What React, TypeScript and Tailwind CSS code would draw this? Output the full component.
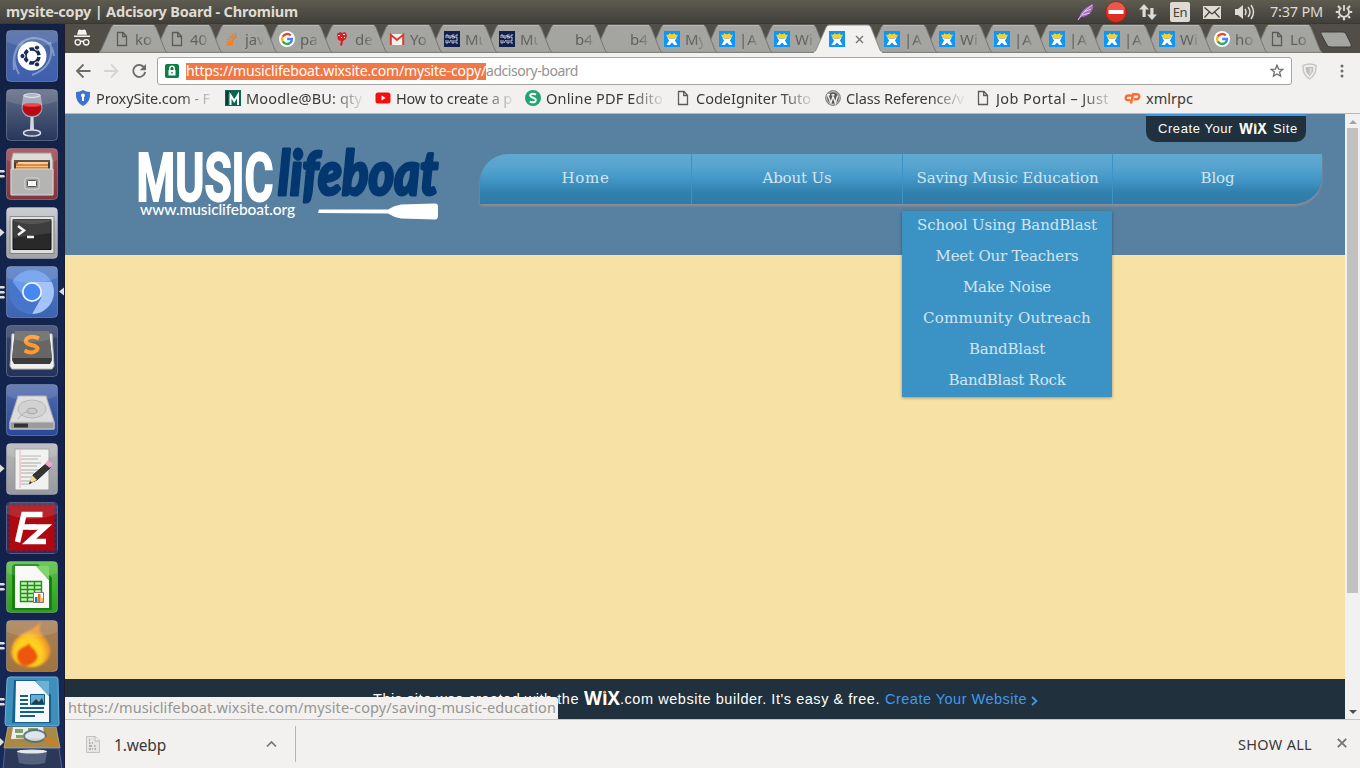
import { useLayoutEffect, useRef, type ReactNode } from "react";

const UI = "font-['Noto_Sans','Open_Sans',sans-serif]";

/* Text run that is tracked to fill a known width. */
function Fit({ w, className = "", children }: { w: number; className?: string; children: string }) {
  const ref = useRef<HTMLSpanElement>(null);
  useLayoutEffect(() => {
    const el = ref.current;
    if (!el) return;
    el.style.letterSpacing = "0px";
    const natural = el.getBoundingClientRect().width;
    el.style.letterSpacing = `${(w - natural) / children.length}px`;
  }, [w, children]);
  return (
    <span ref={ref} className={`inline-block shrink-0 whitespace-pre ${className}`}>
      {children}
    </span>
  );
}

const DocIcon = () => (
  <svg width="16" height="16" viewBox="0 0 16 16" fill="none" stroke="#5c5b59" strokeWidth="1.3">
    <path d="M3.5 1.5h5.5l3.5 3.7v9.3h-9zM8.7 1.5v4h3.8" />
  </svg>
);
const GoogleIcon = () => (
  <svg width="16" height="16" viewBox="0 0 16 16">
    <circle cx="8" cy="8" r="8" fill="#fff" />
    <g fill="none" strokeWidth="2.3">
      <path d="M11.7 4.5A5 5 0 0 0 3.7 5.6" stroke="#ea4335" />
      <path d="M3.7 5.5a5 5 0 0 0 0 5" stroke="#fbbc05" />
      <path d="M3.7 10.4a5 5 0 0 0 7.7 1.3" stroke="#34a853" />
      <path d="M11.3 11.8A5 5 0 0 0 13 8H8.2" stroke="#4285f4" />
    </g>
  </svg>
);
const StackIcon = () => (
  <svg width="16" height="16" viewBox="0 0 16 16" fill="none" strokeWidth="1.3">
    <path d="M2.500 13.500h6.500M2.700 11l6.300.9M3.500 8.200l5.800 2M5.500 5.300l4.800 3.500M8 3l3 4.800M11.200 1.500l.8 5.500" stroke="#ef7d22" />
  </svg>
);
const RedIcon = () => (
  <svg width="16" height="16" viewBox="0 0 16 16">
    <path d="M3 3l3-2 2 1 3-1 2 3-1 4-3 2-1 5-2-1 1-4-3-1z" fill="#d31f26" />
    <path d="M4 4h2v1H4zM9 3h2v1H9zM7 6h1v1H7zM10 6h1v1h-1z" fill="#fff" />
  </svg>
);
const GmailIcon = () => (
  <svg width="16" height="16" viewBox="0 0 16 16">
    <path d="M1 3h14v11H1z" fill="#f4f3f1" />
    <path d="M1.8 14V3.8L8 9l6.2-5.2V14" fill="none" stroke="#d83b30" strokeWidth="2" />
  </svg>
);
const MusicIcon = () => (
  <svg width="16" height="16" viewBox="0 0 16 16">
    <path d="M0 0h16v16H0z" fill="#12204d" />
    <path d="M2 7V4h2v3M5 4v3h2V4M10.500 4H8v1.500h2.500V7H8M14 4h-2v3h2M2 9v3h2V9M5 12l2-3M8 9v3h2V9M14 9h-2v3h2" fill="none" stroke="#c2c8d8" strokeWidth="1" />
  </svg>
);
const WixIcon = () => (
  <svg width="16" height="16" viewBox="0 0 16 16">
    <path d="M0 0h16v16H0z" fill="#0b96f8" />
    <path d="M3.200 6.500q4.800 2.500 9.600 0L10.900 9.500 13.500 14H10.300L8 11.500 5.700 14H2.500l2.600-4.500z" fill="#fff" />
    <path d="M2 3.500l2 .5L5.500 2.300 8 3.600l2.500-1.300L12 4l2-.5-1.300 3Q8 8.800 3.300 6.500z" fill="#fcd023" />
  </svg>
);

type Tab = { icon?: () => ReactNode; text: string; active?: boolean };
const tabs: Tab[] = [
  { icon: DocIcon, text: "ko" },
  { icon: DocIcon, text: "40" },
  { icon: StackIcon, text: "jav" },
  { icon: GoogleIcon, text: "pa" },
  { icon: RedIcon, text: "de" },
  { icon: GmailIcon, text: "Yo" },
  { icon: MusicIcon, text: "Mu" },
  { icon: MusicIcon, text: "Mu" },
  { text: "b4" },
  { text: "b4" },
  { icon: WixIcon, text: "My" },
  { icon: WixIcon, text: "| A" },
  { icon: WixIcon, text: "Wi" },
  { icon: WixIcon, text: "", active: true },
  { icon: WixIcon, text: "| A" },
  { icon: WixIcon, text: "Wi" },
  { icon: WixIcon, text: "| A" },
  { icon: WixIcon, text: "| A" },
  { icon: WixIcon, text: "| A" },
  { icon: WixIcon, text: "Wi" },
  { icon: GoogleIcon, text: "ho" },
  { icon: DocIcon, text: "Lo" },
];

function TabStrip() {
  return (
    <div className="flex h-[29px] bg-[#504e46]">
      <div className="flex w-[34px] shrink-0 justify-center pt-[5px]">
        <svg width="18" height="18" viewBox="0 0 18 18" fill="#f4f3f0">
          <path d="M5.2 1.4l.9-.9 2.9.6 2.9-.6.9.9 1.2 4.3H4zM1 6.6h16v1.4H1z" />
          <g fill="none" stroke="#f4f3f0" strokeWidth="1.4">
            <circle cx="4.8" cy="13.3" r="2.7" />
            <circle cx="13.2" cy="13.3" r="2.7" />
            <path d="M7.5 12.6q1.5-.8 3 0" />
          </g>
        </svg>
      </div>
      {tabs.map((t, i) => {
        const Icon = t.icon;
        return (
          <div key={i} className="relative h-[29px] w-[55px] shrink-0" style={{ zIndex: t.active ? 40 : 30 - i }}>
            <svg className="absolute left-0 top-0" width="70" height="29" viewBox="0 0 70 29">
              <path
                d="M0 28.500L2 26 12 3.500Q13 1 15 1H54Q56 1 57 3.500L66 26 68 28.500V29H0Z"
                fill={t.active ? "#f2f1f0" : "#a4a4a1"}
                stroke={t.active ? "#8a8985" : "#72716d"}
                strokeWidth=".9"
              />
              <path d="M0 28.500H68" stroke={t.active ? "#f2f1f0" : "#82817e"} strokeWidth="1.4" />
              {!t.active && <path d="M14 1.500H55" stroke="#b8b8b5" />}
            </svg>
            <div className="relative flex h-full items-center pl-[15px] pt-[1px]">
              <span className="block h-4 w-4">{Icon && <Icon />}</span>
              {t.active ? (
                <svg className="ml-[10px]" width="9" height="9" viewBox="0 0 9 9" stroke="#777673" strokeWidth="1.4">
                  <path d="M1 1l7 7M8 1L1 8" />
                </svg>
              ) : (
                <span
                  className={`block overflow-hidden whitespace-pre text-[15px] leading-5 text-[#62615f] [mask-image:linear-gradient(90deg,#000_55%,rgba(0,0,0,0.25)_100%)] [word-spacing:-4px] ${t.text === "| A" ? "ml-[4px] w-[19px]" : "ml-[5px] w-[18px]"} ${UI}`}
                >
                  {t.text}
                </span>
              )}
            </div>
          </div>
        );
      })}
      <svg className="ml-[10px] mt-[6px] shrink-0" width="38" height="20" viewBox="0 0 38 20">
        <path d="M3 2h21q2 0 3 2l5 10q1 3-1 3H12q-3 0-4-2L2 4q-1-2 1-2z" fill="#a4a4a1" stroke="#3d3c37" />
      </svg>
    </div>
  );
}

function SystemBar() {
  return (
    <div
      className={`flex h-6 shrink-0 items-center bg-[linear-gradient(#5e5b4f,#56544b_25%,#403f3a_95%,#34332e)] pl-1.5 text-[#dfdbd2] ${UI}`}
    >
      <Fit w={292} className="-mt-[2px] text-[14.5px] font-bold leading-6">
        mysite-copy | Adcisory Board - Chromium
      </Fit>
      <div className="ml-auto flex h-6 items-center">
        <svg width="18" height="18" viewBox="0 0 18 18">
          <path d="M1 17L4 10Q8 4 16 1q1 4-2 8-4 5-10 5z" fill="#a56fc6" />
          <path d="M1 17Q6 8 15 2M5 12l8-2M7 9l7-3" stroke="#e3c3ef" fill="none" />
        </svg>
        <svg className="ml-[10px]" width="22" height="22" viewBox="0 0 22 22">
          <circle cx="11" cy="11" r="10.500" fill="#d93126" stroke="#a91d17" />
          <path d="M2 9a9 8 0 0 1 18 0q-9 4-18 0z" fill="#ef756a" opacity=".6" />
          <path d="M3.500 9h15v4h-15z" fill="#fff" />
        </svg>
        <svg className="ml-[12px]" width="18" height="18" viewBox="0 0 18 18" fill="#dfdbd2">
          <path d="M5 1l5 5.500H6.700V14H3.500V6.500H0zM13 17l-5-5.500h3.300V5h3.200v6.500H18z" />
        </svg>
        <div className="ml-[13px] flex h-[20px] w-[20px] items-center justify-center rounded-[2px] bg-[#dfdbd2] text-[13px] leading-5 tracking-[-0.5px] text-[#44423c]">
          En
        </div>
        <svg className="ml-[13px]" width="18" height="13" viewBox="0 0 18 13">
          <path d="M0 0h18v13H0z" fill="#dfdbd2" />
          <path d="M1.500 1.500L9 8l7.500-6.500M1.500 11.500L6.500 6M16.500 11.500L11.500 6" stroke="#45433e" strokeWidth="1.300" fill="none" />
        </svg>
        <svg className="ml-[14px]" width="20" height="16" viewBox="0 0 20 16">
          <path d="M0 5h3l5-4v14l-5-4H0z" fill="#dfdbd2" />
          <path d="M10 5q2 3 0 6M13 3q4 5 0 10M16 1q5 7 0 14" stroke="#dfdbd2" strokeWidth="1.500" fill="none" />
        </svg>
        <Fit w={53} className="-mt-[2px] ml-[15px] text-[14.5px] leading-6">
          7:37 PM
        </Fit>
        <svg className="ml-[12px] mr-[7px]" width="18" height="18" viewBox="0 0 18 18" fill="none" stroke="#dfdbd2">
          <path d="M6.200 4.800a5 5 0 1 0 5.600 0" strokeWidth="1.900" />
          <path d="M9 2v6" strokeWidth="1.800" />
          <path d="M3 3l1.800 1.800M15 3l-1.800 1.800M.800 9h2.500M14.700 9h2.500M3 15l1.800-1.800M15 15l-1.800-1.800M9 14.700v2.500" strokeWidth="2.200" />
        </svg>
      </div>
    </div>
  );
}

function Toolbar() {
  return (
    <div className="flex h-[33px] items-center bg-[#f2f1f0]">
      <svg className="ml-[10px] mt-[3px]" width="16" height="16" viewBox="0 0 16 16" fill="none" stroke="#6d6c6a" strokeWidth="1.800">
        <path d="M15.500 8H2M8.500 1.500L2 8l6.500 6.500" />
      </svg>
      <svg className="ml-[12px] mt-[3px]" width="16" height="16" viewBox="0 0 16 16" fill="none" stroke="#d5d4d2" strokeWidth="1.800">
        <path d="M1 8h13.500M8 1.500L14.500 8 8 14.500" />
      </svg>
      <svg className="ml-[12px] mt-[3px]" width="16" height="16" viewBox="0 0 16 16">
        <path d="M13.300 4.600A6 6 0 1 0 14.200 9" fill="none" stroke="#6d6c6a" strokeWidth="1.900" />
        <path d="M15 1v6.200H8.800z" fill="#6d6c6a" />
      </svg>
      <div className="ml-[10px] mt-[3px] flex h-7 w-[1135px] items-center rounded-[3px] border border-[#a6a5a3] bg-white pl-[7px]">
        <svg width="14" height="14" viewBox="0 0 14 14">
          <rect width="14" height="14" rx="2" fill="#0b8043" />
          <path d="M3.500 6h7v5.500h-7z" fill="#fff" />
          <path d="M4.800 6V4.300a2.200 2.200 0 0 1 4.400 0V6" fill="none" stroke="#fff" strokeWidth="1.400" />
          <path d="M6.300 8h1.400v1.500H6.300z" fill="#0b8043" />
        </svg>
        <Fit w={300} className={`ml-[7px] h-[17px] bg-[#f07746] text-[14px] leading-[16px] text-white ${UI}`}>
          https://musiclifeboat.wixsite.com/mysite-copy/
        </Fit>
        <Fit w={92} className={`h-[17px] text-[14px] leading-[16px] text-[#949392] ${UI}`}>
          adcisory-board
        </Fit>
        <svg className="ml-auto mr-[7px]" width="14" height="14" viewBox="0 0 14 14" fill="none" stroke="#6d6c6a" strokeWidth="1.300">
          <path d="M7 1.200l1.600 3.900 4.200.3-3.200 2.700 1 4.100L7 10l-3.600 2.200 1-4.100L1.200 5.400l4.200-.3z" />
        </svg>
      </div>
      <svg className="ml-[10px] mt-[3px]" width="15" height="17" viewBox="0 0 15 17">
        <path d="M1 2.500Q7.500-.5 14 2.500 14.500 12 7.500 16 .5 12 1 2.500z" fill="#eeedec" stroke="#c5c4c3" strokeWidth="1.400" />
        <path d="M4 4.500h7Q11 10 7.500 12.500 4 10 4 4.500z" fill="#d8d7d6" stroke="#bbbab9" />
        <path d="M7.500 4v8Q4 10 4 4.500z" fill="#c0bfbe" />
      </svg>
      <svg className="ml-[23px] mt-[3px]" width="4" height="14" viewBox="0 0 4 14" fill="#6d6c6a">
        <circle cx="2" cy="2" r="1.500" />
        <circle cx="2" cy="7" r="1.500" />
        <circle cx="2" cy="12" r="1.500" />
      </svg>
    </div>
  );
}

const ProxyIcon = () => (
  <svg width="16" height="16" viewBox="0 0 16 16">
    <path d="M1 2q4 0 7-2 3 2 7 2 1 10-7 14Q0 12 1 2z" fill="#3d73ce" />
    <circle cx="8" cy="5.500" r="1.900" fill="#fff" />
    <path d="M7 6h2v5H7z" fill="#fff" />
  </svg>
);
const MoodleIcon = () => (
  <svg width="16" height="16" viewBox="0 0 16 16">
    <path d="M0 0h16v16H0z" fill="#0a6650" />
    <path d="M1 1h5v3H3v11H1z" fill="#063f33" />
    <path d="M5.500 15V5l3.700 6L13 5v10" fill="none" stroke="#fff" strokeWidth="2" />
  </svg>
);
const YoutubeIcon = () => (
  <svg width="16" height="16" viewBox="0 0 16 16">
    <rect x="0.500" y="2.500" width="15" height="11" rx="2.500" fill="#f40f0f" />
    <path d="M6.500 5.500v5L10.700 8z" fill="#fff" />
  </svg>
);
const PdfIcon = () => (
  <svg width="16" height="16" viewBox="0 0 16 16">
    <circle cx="8" cy="8" r="8" fill="#20a376" />
    <path d="M11 4.700Q8 2.800 5.700 4.300 4 6.500 8 7.700q4 1.300 2.300 3.700Q8 13.300 4.800 11.300" fill="none" stroke="#fff" strokeWidth="2" />
  </svg>
);
const WordpressIcon = () => (
  <svg width="16" height="16" viewBox="0 0 16 16">
    <circle cx="8" cy="8" r="7.400" fill="#5a5958" stroke="#8d8c8b" />
    <circle cx="8" cy="8" r="6.300" fill="none" stroke="#f2f1f0" strokeWidth=".8" />
    <path d="M2.800 5l3 8L8 6.500l2.400 6.500 2.300-7.500M2 4.700h3M6.500 4.700h3" fill="none" stroke="#f2f1f0" strokeWidth="1.400" />
  </svg>
);
const CpanelIcon = () => (
  <svg width="17" height="16" viewBox="0 0 17 16" fill="none" stroke="#ff6c2c" strokeWidth="2.400" strokeLinecap="round">
    <path d="M6.800 5.500H4.500q-2.500 0-2.800 2.300-.2 2.300 2.200 2.300h1.500M7.200 12.500l2-8.300h3.600q2.600 0 2.500 2.400-.4 2.600-3 2.600h-1.500" />
  </svg>
);

const bookmarks = [
  { icon: ProxyIcon, text: "ProxySite.com - F", w: 114 },
  { icon: MoodleIcon, text: "Moodle@BU: qty", w: 116 },
  { icon: YoutubeIcon, text: "How to create a p", w: 116 },
  { icon: PdfIcon, text: "Online PDF Edito", w: 117 },
  { icon: DocIcon, text: "CodeIgniter Tuto", w: 115 },
  { icon: WordpressIcon, text: "Class Reference/v", w: 118 },
  { icon: DocIcon, text: "Job Portal – Just", w: 113 },
];

function BookmarksBar() {
  return (
    <div className={`flex h-7 items-center border-b border-[#b9b8b6] bg-[#f2f1f0] pb-[3px] pl-[10px] text-[14.5px] text-[#3a3937] ${UI}`}>
      {bookmarks.map(({ icon: Icon, text, w }) => (
        <div key={text} className="flex h-6 w-[150px] shrink-0 items-center gap-[5px]">
          <Icon />
          <div className="flex w-[118px] overflow-hidden [mask-image:linear-gradient(90deg,#000_72%,rgba(0,0,0,0.12)_98%)]">
            <Fit w={w} className="leading-6">
              {text}
            </Fit>
          </div>
        </div>
      ))}
      <div className="-ml-px flex h-6 items-center gap-[5px]">
        <CpanelIcon />
        <Fit w={47} className="leading-6">
          xmlrpc
        </Fit>
      </div>
    </div>
  );
}

/* Launcher artwork, each on a 52 by 52 tile. */
function Tile({ from, to, pips = 0, children }: { from: string; to: string; pips?: number; children: ReactNode }) {
  const id = `tile${from.slice(1)}${to.slice(1)}`;
  return (
    <svg className="mb-[7px] shrink-0" width="65" height="52" viewBox="-6 0 65 52">
      <defs>
        <linearGradient id={id} x2="0" y2="1">
          <stop stopColor={from} />
          <stop offset="1" stopColor={to} />
        </linearGradient>
      </defs>
      <rect x=".5" y=".5" width="51" height="51" rx="4" fill={`url(#${id})`} stroke="#fff" strokeOpacity=".25" />
      {children}
      <path d="M4 1h44q3 0 3 4v7Q26 22 1 12V5q0-4 3-4z" fill="#fff" opacity=".12" />
      {pips === 1 && <path d="M-6 21.500l4.500 4-4.500 4z" fill="#dedede" />}
      {pips === 2 && <path d="M-6 22h4l1 1.500-1 1h-4zM-6 27h4l1 1.500-1 1h-4z" fill="#dedede" />}
      {pips === 3 && <path d="M-6 20h4l1 1.500-1 1h-4zM-6 25h4l1 1.500-1 1h-4zM-6 30h4l1 1.500-1 1h-4z" fill="#dedede" />}
    </svg>
  );
}

function Launcher() {
  return (
    <div className="flex h-[744px] w-[65px] shrink-0 flex-col overflow-hidden border-r border-[#1c1c2c] bg-[linear-gradient(#122143,#13254f_40%,#12214a_70%,#182b5c)] pt-[6px]">
      <Tile from="#4d68a4" to="#3e5fae">
        <g fill="none" stroke="#a9bce0" strokeWidth="2" opacity=".6">
          <path d="M8 40Q5 12 26 8q20 0 22 18M13 44Q2 24 17 13M44 12q6 24-18 33" />
        </g>
        <circle cx="26" cy="26" r="14.500" fill="#fff" />
        <circle cx="26" cy="26" r="7" fill="none" stroke="#19295a" strokeWidth="3.600" strokeDasharray="12.600 2.060" strokeDashoffset="-1" />
        <g fill="#19295a" stroke="#fff" strokeWidth="1">
          <circle cx="16.500" cy="26" r="2.600" />
          <circle cx="31" cy="17.600" r="2.600" />
          <circle cx="31" cy="34.400" r="2.600" />
        </g>
      </Tile>
      <Tile from="#626d87" to="#27365d">
        <path d="M18 6h16l2 13q-1 9-10 9t-10-9z" fill="#c9ced8" opacity=".6" stroke="#e7e9ee" />
        <path d="M17 16h18l.5 4q-2 7-9.500 7t-9.500-7z" fill="#b90b13" />
        <ellipse cx="26" cy="16" rx="9" ry="2" fill="#e7303a" />
        <ellipse cx="26" cy="6.500" rx="8" ry="1.800" fill="none" stroke="#f2f2f5" />
        <path d="M24.500 28h3l.5 14h-4z" fill="#d6d9e0" />
        <ellipse cx="26" cy="44" rx="8.500" ry="3" fill="#454f68" stroke="#d8dbe2" strokeWidth="1.500" />
      </Tile>
      <Tile from="#a34a52" to="#84343d" pips={2}>
        <path d="M7 5h38l2 8v33H5V13z" fill="#d7d7d5" stroke="#8c8c8a" />
        <path d="M8 12h36v10H8z" fill="#4a3c33" />
        <path d="M10 15h32v8H10z" fill="#e28238" />
        <path d="M12 14h30v2H12zM10 18h32v1H10z" fill="#f9c58b" />
        <path d="M5 21h42v26H5z" fill="#b4b4b2" stroke="#d9d9d7" />
        <rect x="19" y="30" width="14" height="11" rx="2" fill="#989896" stroke="#ddd" />
        <rect x="21.500" y="32.500" width="9" height="6" rx="1" fill="#f6f6f6" stroke="#555" />
      </Tile>
      <Tile from="#c4c6ca" to="#a1a3a7" pips={1}>
        <path d="M4 9.500h44v37H4z" fill="#dededd" stroke="#7f7f7f" />
        <path d="M7 12.500h38v30H7z" fill="#282928" stroke="#111" />
        <path d="M7 12h38v14L7 31z" fill="#fff" opacity=".1" />
        <path d="M12 19l6 4.500-6 4.500M21 30h7" fill="none" stroke="#f2f2f2" strokeWidth="2.500" />
      </Tile>
      <Tile from="#577fc4" to="#3b63b0" pips={3}>
        <circle cx="26" cy="26" r="22" fill="#5b90e6" />
        <path d="M26 16h19.500A22 22 0 0 1 26 48l9.500-17z" fill="#a3c3fa" />
        <path d="M6.500 15.500A22 22 0 0 0 26 48l9-16-17-1z" fill="#4675cb" />
        <path d="M6.500 15.500A22 22 0 0 1 45.500 16H26L16 28z" fill="#6b9ceb" />
        <circle cx="26" cy="26" r="10" fill="#f2f6ff" />
        <circle cx="26" cy="26" r="8.300" fill="#4688f1" />
        <path d="M58 21.500l-5 4 5 4z" fill="#dedede" />
      </Tile>
      <Tile from="#3b496d" to="#24335b">
        <path d="M6 9h40l2 32-2 3H6l-2-3z" fill="#f0f0ee" stroke="#bbb" />
        <path d="M9 6h34l3 29-2 4H8l-2-4z" fill="#3b3b3b" />
        <path d="M9 6h34l3 27H6z" fill="#666665" />
        <path d="M33 13.500Q26 10 21 13.500q-4 4.500 4.500 6.500 8.500 2 5 5.500-5 4-12 0" fill="none" stroke="#ff9a2e" strokeWidth="4" />
      </Tile>
      <Tile from="#536dad" to="#2a489a">
        <path d="M12 12h28l8 25v8H4v-8z" fill="#dcdcdc" stroke="#aaa" />
        <path d="M4 38h44v7H4z" fill="#9a9b9c" stroke="#ccc" />
        <path d="M8 39.500h14v4H8z" fill="#333" />
        <ellipse cx="26" cy="25" rx="14" ry="9" fill="#d2d2d2" stroke="#b8b8b8" />
        <ellipse cx="26" cy="27" rx="5" ry="2.800" fill="#cacaca" stroke="#a2a2a2" />
        <path d="M12 35q5-8 12-7" fill="none" stroke="#b1b1b1" />
      </Tile>
      <Tile from="#b7b8bb" to="#98999d" pips={1}>
        <path d="M9 6h34v41H9z" fill="#f1f1ef" stroke="#999" />
        <path d="M15 13h20M15 16h17M15 20h20M15 23h16M15 27h18M15 30h13M15 34h17M15 38h14M15 41h9" stroke="#aaa" strokeWidth="1" />
        <path d="M14 7v38" stroke="#efa8ad" />
        <path d="M24 40l3-8 14-12 4 4-14 13z" fill="#343434" stroke="#222" />
        <path d="M23 41l3-9 5 5z" fill="#ead98f" />
        <path d="M39 21l3-4 5 4-3 4z" fill="#eca5cb" />
        <path d="M24 38l-1 3 3-1z" fill="#222" />
      </Tile>
      <Tile from="#423058" to="#2b2f60">
        <path d="M2.500 2.500h47v47h-47z" fill="#ae0810" />
        <path d="M2.500 2.500h47v47h-47z" fill="none" stroke="#34295a" strokeWidth="3.200" strokeDasharray="0 5.222" strokeLinecap="round" />
        <g fill="none" stroke="#fff" strokeWidth="5.600">
          <path d="M11.500 40l6.500-28M15.500 12.500h21M14.500 25h15" />
          <path d="M23 25h16L23 39.500h17" />
        </g>
      </Tile>
      <Tile from="#5bbf43" to="#2e9d20" pips={2}>
        <path d="M8 3h24l14 14v32H6V5z" fill="#15820e" />
        <path d="M9 5h21l13 14v28H9z" fill="#f9f9f8" />
        <path d="M30 5l13 14V5z" fill="#72cf5a" />
        <g stroke="#219114" strokeWidth="1.400" fill="#bff3b2">
          <path d="M14.500 20.500h21v20h-21zM21.500 20.500v20M28.500 20.500v20M14.500 24.500h21M14.500 28.500h21M14.500 32.500h21M14.500 36.500h21" />
        </g>
        <path d="M27.500 31.500h10v10h-10z" fill="#fff" stroke="#777" />
        <path d="M29 36h2.500v5H29z" fill="#1c77bd" />
        <path d="M32 33h2.500v8H32z" fill="#ec6b20" />
        <path d="M35 37h2v4h-2z" fill="#f3c623" />
      </Tile>
      <Tile from="#a98159" to="#a1743e" pips={2}>
        <defs>
          <radialGradient id="flame" cx=".45" cy=".7">
            <stop stopColor="#ffe51c" />
            <stop offset=".7" stopColor="#fdcb20" />
            <stop offset="1" stopColor="#f0962c" />
          </radialGradient>
          <filter id="flameSoft">
            <feGaussianBlur stdDeviation="1.200" />
          </filter>
        </defs>
        <g filter="url(#flameSoft)">
          <path d="M5 32Q6 19 18 13 28 9 35 2q-4 9 2 14 12 13 4 24-7 8-18 7Q6 45 5 32z" fill="url(#flame)" />
          <path d="M11 38q-1-9 8-12 3-1 4-3 1 3 5 6 6 7 2 12-5 5-11 5-6-1-8-8z" fill="#ee570c" />
        </g>
      </Tile>
      <div className="-mt-[3px] flex flex-col">
        <svg width="65" height="51" viewBox="0 0 65 51">
          <path d="M10 1h46q2 0 2 3l1 44q0 2-2 2H8q-3 0-3-3L7 4q0-3 3-3z" fill="#3f8fbd" stroke="#72b1d3" />
          <path d="M14 4h22l15 15v28H12z" fill="#16608c" />
          <path d="M16 5h19l14 15v26H15z" fill="#f7f8f9" />
          <path d="M35 5l14 15V5z" fill="#6bb1d6" />
          <path d="M20 20h8M20 24h8M20 28h8M20 32h24M20 36h24M20 40h15" stroke="#175e8b" strokeWidth="2" />
          <path d="M30.500 18.500h14v10h-14z" fill="#63afdc" stroke="#175e8b" />
          <path d="M31 28l5-5 3 3 3-4 2 6z" fill="#253b45" />
          <path d="M0 22h4l1 1.500-1 1H0zM0 27h4l1 1.500-1 1H0z" fill="#dedede" />
        </svg>
        <svg width="65" height="43" viewBox="0 0 65 43">
          <path d="M8 0h48l4 21H4z" fill="#a68a45" stroke="#bba261" />
          <path d="M13 0h30l2 11-34 1z" fill="#eee" />
          <path d="M15 2h8v4h-8zM28 1h10v3H28zM16 8h7v3h-7z" fill="#86a260" />
          <ellipse cx="35" cy="9" rx="11" ry="6" fill="#d9e5ec" opacity=".85" stroke="#596a78" strokeWidth="2" />
          <path d="M46 12l9 5" stroke="#cf7e22" strokeWidth="4" strokeLinecap="round" />
          <path d="M5 21.500h54l3 21H3z" fill="#2b3858" stroke="#55638a" />
          <path d="M17 25h30l-2 11q-13 3-26 0z" fill="#8a94ab" opacity=".45" />
          <ellipse cx="32" cy="24.500" rx="15" ry="2" fill="#e4e7ec" />
          <path d="M0 11l4 4-4 4z" fill="#dedede" />
        </svg>
      </div>
    </div>
  );
}

function Logo() {
  return (
    <svg className="mt-[30px] ml-[70px] shrink-0" width="310" height="80" viewBox="135 144 310 80">
      <text
        x="136.500"
        y="201"
        textLength="137"
        lengthAdjust="spacingAndGlyphs"
        fill="#fff"
        stroke="#fff"
        strokeWidth="1.800"
        className="font-['Roboto','Liberation_Sans',sans-serif] text-[67px] font-bold"
      >
        MUSIC
      </text>
      <text
        x="278"
        y="195"
        textLength="160"
        lengthAdjust="spacingAndGlyphs"
        fill="#043770"
        stroke="#043770"
        strokeWidth="3"
        strokeLinejoin="round"
        className="font-['Lato',sans-serif] text-[61px] font-black italic"
      >
        lifeboat
      </text>
      <text
        x="140"
        y="215"
        textLength="155"
        fill="#fff"
        className="font-['Lato',sans-serif] text-[15.5px] font-medium"
      >
        www.musiclifeboat.org
      </text>
      <path d="M319 209.500h69q6-4 13-5l34-1q3 0 3 3v9q0 4-3 4l-34-1q-7-1-13-5l-70-.500z" fill="#fff" />
    </svg>
  );
}

function WixWord({ width, size }: { width: number; size: number }) {
  return (
    <svg width={width} height={size} viewBox={`0 0 ${width} ${size}`} className="shrink-0">
      <text
        x="0"
        y={size - 1}
        textLength={width}
        lengthAdjust="spacingAndGlyphs"
        fill="#fff"
        fontSize={size * 1.26}
        className="font-['Open_Sans',sans-serif] font-bold"
      >
        W<tspan>ı</tspan>X
      </text>
      <circle cx={width * 0.575} cy={size * 0.14} r={size * 0.1} fill="#fbbd15" />
    </svg>
  );
}

const navItems = [
  { label: "Home", w: 48, cell: "w-[212px]" },
  { label: "About Us", w: 69, cell: "w-[211px]" },
  { label: "Saving Music Education", w: 182, cell: "w-[210px]" },
  { label: "Blog", w: 34, cell: "w-[209px]" },
];
const subItems = [
  { label: "School Using BandBlast", w: 180 },
  { label: "Meet Our Teachers", w: 143 },
  { label: "Make Noise", w: 88 },
  { label: "Community Outreach", w: 168 },
  { label: "BandBlast", w: 76 },
  { label: "BandBlast Rock", w: 117 },
];
const SLAB = "font-['Museo_Slab','Roboto_Slab','DejaVu_Serif',serif] text-[15px] font-light text-[#d3e5f0]";

function SiteHeader() {
  return (
    <header className="relative flex h-[141px] shrink-0 bg-[#5780a1]">
      <Logo />
      <nav className="ml-[35px] mt-10 flex h-[50px] w-[842px] shrink-0 rounded-br-[28px] rounded-tl-[28px] bg-[linear-gradient(#60a9d1,#57a4cf_25%,#4297c7_50%,#3181ae_76%,#327aa5)] shadow-[0_2px_3px_rgba(170,150,145,0.7)]">
        {navItems.map((n, i) => (
          <div
            key={n.label}
            className={`flex h-full justify-center pt-[12px] ${SLAB} ${n.cell} ${i < 3 ? "border-r border-[#3d93c6]" : ""}`}
          >
            <Fit w={n.w} className="leading-6">
              {n.label}
            </Fit>
          </div>
        ))}
      </nav>
      <div className="absolute left-[837px] top-[97px] z-10 flex w-[210px] flex-col bg-[#3b93c5] shadow-[0_1px_3px_rgba(0,0,0,0.35)]">
        {subItems.map((s) => (
          <div key={s.label} className={`flex h-[31px] justify-center pt-[2px] ${SLAB}`}>
            <Fit w={s.w} className="leading-6">
              {s.label}
            </Fit>
          </div>
        ))}
      </div>
      <div className="absolute right-[39px] top-0 flex h-7 w-[160px] items-center rounded-b-[10px] border-t-2 border-[#3899ec] bg-[#20303c] pl-3 font-['Liberation_Sans',sans-serif] text-[13px] text-white">
        <Fit w={75}>Create Your</Fit>
        <span className="mx-[6px] flex">
          <WixWord width={28} size={12} />
        </span>
        <Fit w={25}>Site</Fit>
      </div>
    </header>
  );
}

function Footer() {
  return (
    <footer className="relative flex h-10 shrink-0 items-center bg-[#20303c] pl-[308px] font-['Liberation_Sans',sans-serif] text-[14.5px] text-white">
      <Fit w={206} className="mt-[2px]">
        This site was created with the
      </Fit>
      <span className="mb-[3px] ml-[5px] flex">
        <WixWord width={36} size={16} />
      </span>
      <Fit w={260} className="mt-[2px]">
        .com website builder. It's easy &amp; free.
      </Fit>
      <Fit w={142} className="ml-[5px] mt-[2px] text-[#4199ed]">
        Create Your Website
      </Fit>
      <svg className="ml-[4px] mt-[3px]" width="7" height="10" viewBox="0 0 7 10" fill="none" stroke="#4199ed" strokeWidth="1.800">
        <path d="M1 1l4.500 4L1 9" />
      </svg>
      <div className={`absolute bottom-0 left-0 h-[22px] w-[493px] rounded-tr-[3px] bg-[#f2f1f0] pl-[3px] text-[14.5px] leading-[21px] text-[#969593] ${UI}`}>
        <Fit w={488}>https://musiclifeboat.wixsite.com/mysite-copy/saving-music-education</Fit>
      </div>
    </footer>
  );
}

function Downloads() {
  return (
    <div className={`flex h-[49px] shrink-0 items-center border-t border-[#c6c5c3] bg-[#f2f1f0] text-[#3a3937] ${UI}`}>
      <svg className="ml-[21px]" width="14" height="17" viewBox="0 0 14 17">
        <path d="M.5.500h9l4 4v12H.500z" fill="#e6e5e4" stroke="#c4c3c2" />
        <path d="M9 .500v4.500h4.500" fill="#f5f5f5" stroke="#b9b8b7" />
        <path d="M3 4h1M3 7h1.500M6 7h1M3 10h3M8 10h1.500M3 13h2M6 13h1M8.500 13h1.500" stroke="#a1a09f" strokeWidth="1.500" />
      </svg>
      <Fit w={52} className="ml-[14px] mt-[2px] text-[15.5px] leading-6">
        1.webp
      </Fit>
      <svg className="ml-[100px]" width="11" height="8" viewBox="0 0 11 8" fill="none" stroke="#777674" strokeWidth="1.700">
        <path d="M1 6.500l4.500-4.500L10 6.500" />
      </svg>
      <div className="ml-[18px] h-9 w-px bg-[#b5b4b3]" />
      <Fit w={74} className="-mt-px ml-auto text-[14.5px] leading-6">
        SHOW ALL
      </Fit>
      <svg className="-mt-[2px] ml-[25px] mr-[13px]" width="10" height="10" viewBox="0 0 10 10" stroke="#777674" strokeWidth="1.900">
        <path d="M.800.800l8.400 8.400M9.200.800L.800 9.200" />
      </svg>
    </div>
  );
}

export default function App() {
  return (
    <div className="flex h-[768px] w-[1360px] flex-col overflow-hidden">
      <SystemBar />
      <div className="flex">
        <Launcher />
        <div className="flex h-[744px] w-[1295px] flex-col">
          <TabStrip />
          <Toolbar />
          <BookmarksBar />
          <div className="flex h-[605px] shrink-0">
            <div className="flex w-[1280px] flex-col">
              <SiteHeader />
              <main className="flex-1 bg-[#f8e1a5]" />
              <Footer />
            </div>
            <div className="flex w-[15px] flex-col items-center bg-[#f1f1f1]">
              <svg className="mt-[6px]" width="8" height="4" viewBox="0 0 8 4" fill="#a3a3a3">
                <path d="M0 4l4-4 4 4z" />
              </svg>
              <div className="mt-[4px] h-[465px] w-[11px] bg-[#c1c1c1]" />
              <svg className="mb-[5px] mt-auto" width="8" height="4" viewBox="0 0 8 4" fill="#505050">
                <path d="M0 0h8L4 4z" />
              </svg>
            </div>
          </div>
          <Downloads />
        </div>
      </div>
    </div>
  );
}
